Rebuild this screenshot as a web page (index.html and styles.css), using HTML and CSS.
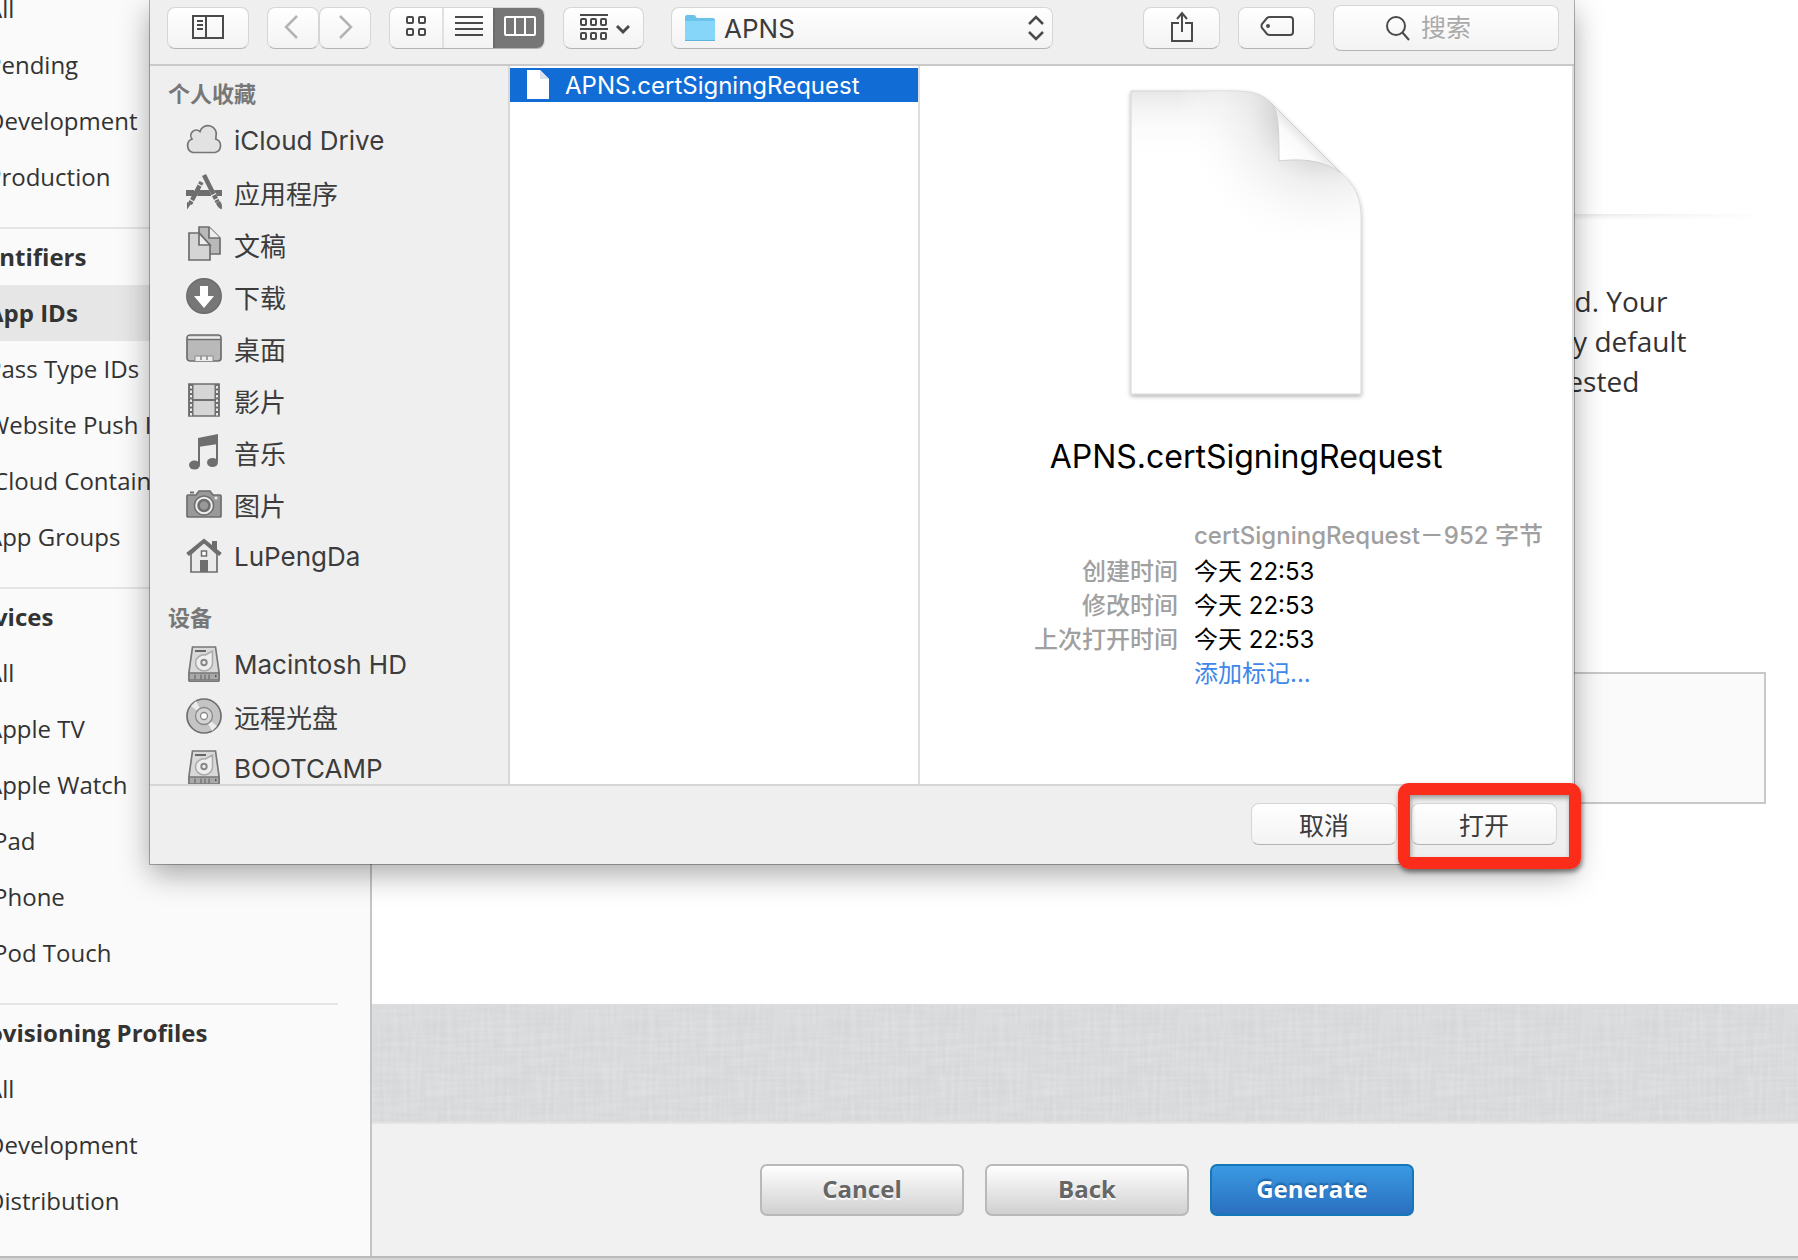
FILE: index.html
```html
<!DOCTYPE html>
<html lang="zh-CN">
<head>
<meta charset="utf-8">
<meta name="viewport" content="width=device-width, initial-scale=1">
<title>Certificates, Identifiers &amp; Profiles</title>
<link rel="stylesheet" href="styles.css">
</head>
<body>
<svg class="defs" aria-hidden="true">
  <symbol id="drive" viewBox="0 0 36 36">
    <path d="M6.500 1h23l3.500 25v8q0 1.500-1.500 1.500h-27q-1.500 0-1.500-1.500v-8z" fill="#d9d9d9" stroke="#777" stroke-width="1.700"/>
    <path d="M3 27h30v7H3z" fill="#a9a9a9" stroke="#777" stroke-width="1.500"/>
    <path d="M9 28.500v5M15 28.500v5M19 28.500v5M23 28.500v5" stroke="#777" stroke-width="1.500"/>
    <path d="M29 30h1.500" stroke="#555" stroke-width="2"/>
    <path d="M9 5h11" stroke="#666" stroke-width="2"/>
    <path d="M26.500 5v11a8.500 8 0 1 1-7-7z" fill="#eee" stroke="#aaa" stroke-width="1.500"/>
    <circle cx="18" cy="16.500" r="2.700" fill="#eee" stroke="#888" stroke-width="2"/>
  </symbol>
</svg>

<div class="page">
  <nav class="side" aria-label="Account">
    <ul>
      <li><a href="#">All</a></li>
      <li><a href="#">Pending</a></li>
      <li><a href="#">Development</a></li>
      <li><a href="#">Production</a></li>
    </ul>
    <h2>Identifiers</h2>
    <ul>
      <li class="current"><a href="#">App IDs</a></li>
      <li><a href="#">Pass Type IDs</a></li>
      <li><a href="#">Website Push IDs</a></li>
      <li><a href="#">iCloud Containers</a></li>
      <li><a href="#">App Groups</a></li>
    </ul>
    <h2>Devices</h2>
    <ul>
      <li><a href="#">All</a></li>
      <li><a href="#">Apple TV</a></li>
      <li><a href="#">Apple Watch</a></li>
      <li><a href="#">iPad</a></li>
      <li><a href="#">iPhone</a></li>
      <li><a href="#">iPod Touch</a></li>
    </ul>
    <h2>Provisioning Profiles</h2>
    <ul>
      <li><a href="#">All</a></li>
      <li><a href="#">Development</a></li>
      <li><a href="#">Distribution</a></li>
    </ul>
  </nav>
  <main class="main">
    <section class="content">
      <div class="rule"></div>
      <p class="intro">When your CSR file is created, a public and private key pair is automatically generated. Your<br>private key is stored on your computer. On a Mac, it is stored in the login Keychain by default<br>and can be viewed in the Keychain Access app under the "Keys" category. Your requested</p>
      <div class="upload"></div>
    </section>
    <div class="linen"></div>
    <footer class="actions">
      <button class="btn" type="button">Cancel</button>
      <button class="btn" type="button">Back</button>
      <button class="btn primary" type="button">Generate</button>
    </footer>
  </main>
</div>

<div class="dialog" role="dialog" aria-label="APNS">
  <div class="toolbar">
    <button class="tool w82" type="button" aria-label="Sidebar">
      <svg width="34" height="26" viewBox="0 0 34 26" fill="none" stroke="#4a4a4a" stroke-width="2"><rect x="2" y="1" width="30" height="22"/><path d="M15 1v22M6 6h6M6 10h6M6 14h6"/></svg>
    </button>
    <div class="pair">
      <button class="tool" type="button" aria-label="Back"><svg width="18" height="28" viewBox="0 0 18 28" fill="none" stroke="#b3b3b3" stroke-width="2.500"><path d="M13 2 2 13l11 11"/></svg></button>
      <button class="tool" type="button" aria-label="Forward"><svg width="18" height="28" viewBox="0 0 18 28" fill="none" stroke="#b3b3b3" stroke-width="2.500"><path d="m4 2 11 11L4 24"/></svg></button>
    </div>
    <div class="segments">
      <button type="button" aria-label="Icons"><svg width="22" height="22" viewBox="0 0 22 22" fill="none" stroke="#4a4a4a" stroke-width="2"><rect x="2" y="2" width="6" height="6" rx="1"/><rect x="14" y="2" width="6" height="6" rx="1"/><rect x="2" y="14" width="6" height="6" rx="1"/><rect x="14" y="14" width="6" height="6" rx="1"/></svg></button>
      <button type="button" aria-label="List"><svg width="28" height="22" viewBox="0 0 28 22" stroke="#4a4a4a" stroke-width="2"><path d="M0 2h28M0 8h28M0 14h28M0 20h28"/></svg></button>
      <button class="on" type="button" aria-label="Columns"><svg width="32" height="22" viewBox="0 0 32 22" fill="none" stroke="#fff" stroke-width="2"><rect x="1" y="2" width="30" height="18" rx="1"/><path d="M11 2v18M21 2v18"/></svg></button>
    </div>
    <button class="tool w81" type="button" aria-label="Group">
      <svg width="52" height="28" viewBox="0 0 52 28" fill="none" stroke="#4a4a4a" stroke-width="2"><path d="M2 1h28M2 15h28"/><rect x="3" y="5" width="5" height="6" rx="1"/><rect x="13" y="5" width="5" height="6" rx="1"/><rect x="23" y="5" width="5" height="6" rx="1"/><rect x="3" y="19" width="5" height="6" rx="1"/><rect x="13" y="19" width="5" height="6" rx="1"/><rect x="23" y="19" width="5" height="6" rx="1"/><path d="m39 12 6 6 6-6" stroke-width="3"/></svg>
    </button>
    <div class="folder">
      <svg class="folder-icon" width="32" height="28" viewBox="0 0 32 28"><path d="M1 3q0-2 2-2h7q1.500 0 2 2l1 1h16q2 0 2 2v18H1z" fill="#6bc3ea"/><path d="M1 7h30v19q0 1-1 1H2q-1 0-1-1z" fill="#85d6f9"/><path d="M1 26.500h30" stroke="#5fb4dc"/></svg>
      <select aria-label="Folder"><option>APNS</option></select>
      <svg class="arrows" width="16" height="26" viewBox="0 0 16 26" fill="none" stroke="#4a4a4a" stroke-width="2.500"><path d="m1 9 7-7 7 7M1 17l7 7 7-7"/></svg>
    </div>
    <button class="tool w77 first-right" type="button" aria-label="Share">
      <svg width="24" height="36" viewBox="0 0 24 36" fill="none" stroke="#4a4a4a" stroke-width="2"><path d="M9 13H2v18h20V13h-7M12 22V3M7 9l5-6 5 6"/></svg>
    </button>
    <button class="tool w77" type="button" aria-label="Tags">
      <svg width="36" height="26" viewBox="0 0 36 26" fill="none" stroke="#4a4a4a" stroke-width="2"><path d="M11 2h20q3 0 3 3v12q0 3-3 3H11q-2 0-3-1l-5-6q-1-2 0-4l5-6q1-1 3-1z"/><circle cx="9" cy="11" r="1"/></svg>
    </button>
    <label class="search">
      <svg width="26" height="26" viewBox="0 0 26 26" fill="none" stroke="#4a4a4a" stroke-width="2"><circle cx="11" cy="11" r="9"/><path d="m17 17 7 8"/></svg>
      <input type="text" placeholder="搜索" aria-label="搜索">
    </label>
  </div>

  <div class="panes">
    <nav class="places" aria-label="个人收藏">
      <h3>个人收藏</h3>
      <ul>
        <li><svg viewBox="0 0 36 36"><path d="M7 30.500a6.500 7 0 0 1-1-13.500 5.500 5.500 0 0 1 8-7.500A8.300 8.300 0 0 1 30 14.500q0 1.500-.300 2.500A7 7 0 0 1 29 30.500z" fill="#e2e2e2" stroke="#757575" stroke-width="1.700"/></svg>iCloud Drive</li>
        <li><svg viewBox="0 0 36 36"><path d="M0 16h8v6H0zM13 16h10l3 6H11zM28 16h8v6h-5z" fill="#6e6e6e"/><path d="M15.500 8 4 30M18 1l13.500 27" stroke="#6e6e6e" stroke-width="4.500"/><path d="m1 28 4 2-4 5.500zM30 29l4-2q3 4 1.500 8.500Q31 33 30 29z" fill="#6e6e6e"/><path d="m12 10 5 3M3 25l5 3M25 22l5-2.500M27 27l6-3" stroke="#eee" stroke-width="1.300"/></svg>应用程序</li>
        <li><svg viewBox="0 0 36 36" fill="#d5d5d5" stroke="#6e6e6e" stroke-width="1.700"><path d="M13 1h10l11 11v16H13z" fill="#b9b9b9"/><path d="M23 1v11h11" fill="#eee"/><path d="M3 7h10l11 12v15H3z"/><path d="M13 7v12h11z" fill="#eee"/></svg>文稿</li>
        <li><svg viewBox="0 0 36 36"><circle cx="18" cy="18" r="17.200" fill="#777" stroke="#6b6b6b" stroke-width="1.500"/><path d="M14 8h8v10h6L18 30 8 18h6z" fill="#fff"/></svg>下载</li>
        <li><svg viewBox="0 0 36 36"><rect x="1" y="5" width="34" height="26" rx="3" fill="#b9b9b9" stroke="#6e6e6e" stroke-width="1.700"/><path d="M2 6.500h32v2.500H2z" fill="#eee"/><path d="M2 9.500h32" stroke="#6e6e6e" stroke-width="1.500"/><path d="M9 31v-5h18v5" fill="#eee" stroke="#888"/><path d="M15 26v4M21 26v4" stroke="#888" stroke-width="1.500"/></svg>桌面</li>
        <li><svg viewBox="0 0 36 36"><path d="M3 2h30v32H3z" fill="#d5d5d5" stroke="#6e6e6e" stroke-width="1.700"/><path d="M5 2v32M31 2v32" stroke="#6e6e6e" stroke-width="5"/><path d="M5 4v30M31 4v30" stroke="#e8e8e8" stroke-width="2" stroke-dasharray="2.500 2"/><path d="M7 18h22" stroke="#6e6e6e" stroke-width="2"/></svg>影片</li>
        <li><svg viewBox="0 0 36 36"><path d="M12 4 32 0v10l-20 3z" fill="#6e6e6e"/><path d="M13 5v26M31 2v25" stroke="#6e6e6e" stroke-width="2"/><ellipse cx="8.500" cy="31" rx="5.500" ry="4.500" fill="#6e6e6e"/><ellipse cx="26.500" cy="28.500" rx="5.500" ry="4.500" fill="#6e6e6e"/></svg>音乐</li>
        <li><svg viewBox="0 0 36 36"><path d="M2 9h8l3-4h11l3 4h7q1 0 1 1v20q0 1-1 1H2q-1 0-1-1V10q0-1 1-1z" fill="#999" stroke="#6e6e6e" stroke-width="1.700"/><path d="M4 6.500h4" stroke="#6e6e6e" stroke-width="2"/><circle cx="18" cy="19.500" r="9.500" fill="#eee" stroke="#6e6e6e" stroke-width="1.500"/><circle cx="18" cy="19.500" r="5.500" fill="#999" stroke="#6e6e6e" stroke-width="2.500"/><circle cx="30" cy="12" r="1.500" fill="#eee"/></svg>图片</li>
        <li><svg viewBox="0 0 36 36"><path d="M26 3h5v11h-5z" fill="#6e6e6e"/><path d="M5 16 18 4l13 12v18H5z" fill="#eaeaea" stroke="#6e6e6e" stroke-width="1.700"/><path d="M1.500 16.500 18 3l16.500 13.500" fill="none" stroke="#6e6e6e" stroke-width="4"/><path d="M14 22h8v12h-8z" fill="#6e6e6e"/><path d="M15.500 13h5v5h-5z" fill="#fff" stroke="#6e6e6e" stroke-width="1.500"/></svg>LuPengDa</li>
      </ul>
      <h3>设备</h3>
      <ul>
        <li><svg><use href="#drive"/></svg>Macintosh HD</li>
        <li><svg viewBox="0 0 36 36"><circle cx="18" cy="18" r="17" fill="#c4c4c4" stroke="#6e6e6e" stroke-width="1.700"/><path d="M18 18 5 8l5-5zM18 18l13 10-5 5z" fill="#ececec"/><circle cx="18" cy="18" r="8.500" fill="#d4d4d4" stroke="#888" stroke-width="1.300"/><circle cx="18" cy="18" r="3.500" fill="#fff" stroke="#888" stroke-width="1.300"/></svg>远程光盘</li>
        <li><svg><use href="#drive"/></svg>BOOTCAMP</li>
      </ul>
    </nav>
    <div class="files">
      <div class="file">
        <svg width="22" height="30" viewBox="0 0 22 30"><path d="M0 0h13l9 9v20H0z" fill="#fff"/><path d="M13 0v9h9z" fill="#d9e2ec"/></svg>
        <span>APNS.certSigningRequest</span>
      </div>
    </div>
    <section class="preview">
      <svg class="sheet" width="252" height="320" viewBox="1120 84 252 320">
        <defs>
          <linearGradient id="top" x1="0" y1="0" x2="0" y2="1"><stop offset="0" stop-color="#e8e8e8"/><stop offset=".06" stop-color="#f4f4f4"/><stop offset=".12" stop-color="#fbfbfb"/><stop offset=".2" stop-color="#fff"/></linearGradient>
          <radialGradient id="curl" gradientUnits="userSpaceOnUse" cx="1322" cy="112" r="145"><stop offset=".2" stop-color="#bbb"/><stop offset=".34" stop-color="#d2d2d2" stop-opacity=".8"/><stop offset=".5" stop-color="#e6e6e6" stop-opacity=".6"/><stop offset=".7" stop-color="#f4f4f4" stop-opacity=".5"/><stop offset="1" stop-color="#fff" stop-opacity="0"/></radialGradient>
          <linearGradient id="flap" x1="0" y1="1" x2="1" y2="0"><stop offset=".2" stop-color="#fff"/><stop offset=".4" stop-color="#fafafa"/><stop offset=".5" stop-color="#e8e8e8"/></linearGradient>
          <filter id="drop" x="-10%" y="-10%" width="120%" height="120%"><feDropShadow dx="0" dy="2" stdDeviation="2" flood-opacity=".3"/></filter>
        </defs>
        <path d="M1131 91h101c18 0 30 2 40 13l68 68c14 12 21 25 21 46v176h-230z" fill="url(#top)" stroke="#d4d4d4" filter="url(#drop)"/>
        <path d="M1131 91h101c18 0 30 2 40 13l68 68c14 12 21 25 21 46v176h-230z" fill="url(#curl)"/>
        <path d="M1271 103c7 9 8 18 8 58 25-3 45 0 62 12z" fill="url(#flap)" stroke="#d0d0d0"/>
      </svg>
      <h1>APNS.certSigningRequest</h1>
      <dl>
        <dt></dt><dd class="kind">certSigningRequest－952 字节</dd>
        <dt>创建时间</dt><dd>今天 22:53</dd>
        <dt>修改时间</dt><dd>今天 22:53</dd>
        <dt>上次打开时间</dt><dd>今天 22:53</dd>
        <dt></dt><dd><a href="#">添加标记...</a></dd>
      </dl>
    </section>
  </div>

  <div class="confirm">
    <button class="tool" type="button">取消</button>
    <div class="marked"><button class="tool" type="button">打开</button></div>
  </div>
</div>
</body>
</html>
```
FILE: styles.css
```css
* { box-sizing: border-box; }

body {
  margin: 0;
  background: #d4d4d4;
  color: #333;
  font-family: "Open Sans", "Noto Sans", sans-serif;
  overflow: hidden;
}

ul, dl, dd, h1, h2, h3, p { margin: 0; padding: 0; }
ul { list-style: none; }
button, input, select { font: inherit; color: inherit; }
svg { flex: none; display: block; }
.defs { position: absolute; width: 0; height: 0; }

/* Portal page, scrolled a little down and to the right */
.page {
  display: flex;
  margin: -19px 0 0 -40px;
  border-bottom: 2px solid #bbb;
}

.side {
  flex: none;
  width: 412px;
  padding-bottom: 27px;
  background: #fafafa;
  border-right: 2px solid #c4c4c4;
  font-size: 24px;
  line-height: 56px;
}

.side li { padding-left: 27px; }
.side a { color: inherit; text-decoration: none; }
.side .current { background: #e6e6e6; font-weight: 700; }

.side h2 {
  margin: 22px 32px 0 0;
  padding-left: 2px;
  border-top: 2px solid #e4e4e4;
  font-size: 24px;
  font-weight: 700;
}

.main {
  flex: 1;
  display: flex;
  flex-direction: column;
  min-width: 0;
  background: #fff;
}

.content { flex: 1; padding: 233px 32px 0 56px; }

.rule {
  height: 6px;
  background: linear-gradient(90deg, transparent 80%, #fff), linear-gradient(#dedede, #fff);
}

.intro { padding: 61px 0 0 50px; font-size: 28px; line-height: 40px; white-space: nowrap; }

.upload {
  height: 132px;
  margin-top: 271px;
  background: #fafafa;
  border: 2px solid #c8c8c8;
}

/* Woven cloth: noise stretched along each axis */
.linen {
  height: 120px;
  border-bottom: 2px solid #e4e4e5;
  background:
    url("data:image/svg+xml,%3Csvg xmlns='http://www.w3.org/2000/svg' width='202' height='202'%3E%3Cfilter id='a' x='0' y='0' width='1' height='1'%3E%3CfeTurbulence type='fractalNoise' baseFrequency='.02 .25' numOctaves='2' stitchTiles='stitch'/%3E%3CfeColorMatrix values='0 0 0 0 1 0 0 0 0 1 0 0 0 0 1 .3 0 0 0 -.1'/%3E%3C/filter%3E%3Cfilter id='b' x='0' y='0' width='1' height='1'%3E%3CfeTurbulence type='fractalNoise' baseFrequency='.25 .02' numOctaves='2' stitchTiles='stitch'/%3E%3CfeColorMatrix values='0 0 0 0 1 0 0 0 0 1 0 0 0 0 1 .3 0 0 0 -.1'/%3E%3C/filter%3E%3Crect width='202' height='202' filter='url(%23a)'/%3E%3Crect width='202' height='202' filter='url(%23b)'/%3E%3C/svg%3E"),
    #d6d7d9;
}

.actions {
  display: flex;
  justify-content: center;
  gap: 21px;
  padding: 40px 0 40px 4px;
  background: #f1f1f1;
}

.btn {
  width: 204px;
  height: 52px;
  padding: 0 0 4px;
  border: 2px solid #b9b9b9;
  border-radius: 7px;
  background: linear-gradient(#fff, #d0d0d0);
  color: #666;
  font-size: 24px;
  font-weight: 700;
  text-shadow: 0 2px 1px #fff;
}

.btn.primary {
  border-color: #1377b8;
  background: linear-gradient(#3b99e3, #2a70bf);
  color: #fff;
  text-shadow: 0 -2px 2px rgba(0,60,120,.5);
}

/* File chooser sheet */
.dialog {
  position: absolute;
  top: 0;
  left: 150px;
  right: 224px;
  background: #efefef;
  box-shadow: 0 0 0 1px rgba(0,0,0,.28), 0 10px 28px rgba(0,0,0,.34);
  color: #3c3c3c;
  font-family: Inter, "Noto Sans CJK SC", sans-serif;
}

.toolbar {
  display: flex;
  align-items: center;
  gap: 18px;
  height: 66px;
  padding: 0 15px 8px 17px;
  border-bottom: 2px solid #c9c9c9;
}

.tool, .segments, .folder, .search {
  display: flex;
  align-items: center;
  justify-content: center;
  height: 42px;
  padding: 0;
  border: 1px solid #d6d6d6;
  border-bottom-color: #b4b4b4;
  border-radius: 8px;
  background: linear-gradient(#fff, #f3f3f3);
}

.w82 { width: 82px; }
.w81 { width: 81px; }
.w77 { width: 77px; }
.pair { display: flex; }
.pair .tool { width: 52px; }

.segments { overflow: hidden; align-items: stretch; }
.segments button {
  display: flex;
  align-items: center;
  justify-content: center;
  width: 51px;
  padding: 0 0 4px;
  border: 0;
  border-left: 2px solid #e0e0e0;
  background: none;
}
.segments button:first-child { width: 52px; border-left: 0; }
.segments .on { background: #767676; border-color: #6b6b6b; }

.folder { position: relative; width: 382px; margin-left: 9px; font-size: 26px; }
.folder select {
  width: 100%;
  height: 40px;
  padding: 0 40px 0 52px;
  border: 0;
  background: none;
  appearance: none;
}
.folder-icon { position: absolute; left: 12px; top: 6px; }
.arrows { position: absolute; right: 8px; top: 7px; }

.first-right { margin-left: auto; }
.search { width: 226px; height: 46px; gap: 10px; }
.search input {
  width: 86px;
  padding: 0;
  border: 0;
  background: none;
  font-size: 25px;
}
.search input::placeholder { color: #aaa; opacity: 1; }

.panes { display: flex; height: 718px; overflow: hidden; }

.places {
  flex: none;
  width: 360px;
  padding: 8px 0 0;
  border-right: 2px solid #d8d8d8;
  font-size: 26px;
}
.places h3 {
  padding-left: 18px;
  color: #777;
  font-size: 22px;
  font-weight: 700;
  line-height: 40px;
}
.places ul + h3 { margin-top: 16px; }
.places li { display: flex; align-items: center; gap: 12px; height: 52px; padding-left: 36px; }
.places svg { width: 36px; height: 36px; }

.files {
  flex: none;
  width: 410px;
  padding-top: 2px;
  border-right: 2px solid #dedede;
  background: #fff;
}
.file {
  display: flex;
  align-items: center;
  gap: 16px;
  height: 34px;
  padding-left: 17px;
  background: #126cd6;
  color: #fff;
  font-size: 24px;
}

.preview {
  flex: 1;
  display: flex;
  flex-direction: column;
  align-items: center;
  padding-top: 18px;
  border-right: 2px solid #dedede;
  background: #fff;
  color: #000;
}
.preview h1 { margin-top: 31px; font-size: 32px; font-weight: 400; line-height: 44px; }

.preview dl {
  display: grid;
  grid-template-columns: 258px 1fr;
  column-gap: 16px;
  align-self: stretch;
  margin-top: 40px;
  font-size: 24px;
  line-height: 34px;
  white-space: nowrap;
}
.preview dt { color: #a0a0a0; font-weight: 500; text-align: right; }
.preview .kind { padding-bottom: 2px; color: #a0a0a0; font-weight: 500; }
.preview a { color: #3f87e8; text-decoration: none; }

.confirm {
  display: flex;
  justify-content: flex-end;
  align-items: flex-start;
  gap: 14px;
  height: 80px;
  padding: 17px 17px 0 0;
  border-top: 2px solid #d6d6d6;
  font-size: 25px;
}
.confirm .tool { width: 146px; }

/* Callout frame round the confirm button */
.marked { position: relative; }
.marked::after {
  content: "";
  position: absolute;
  inset: -20px -24px -24px -13px;
  border: 12px solid #fc2c1b;
  border-radius: 11px;
  box-shadow: 1px 3px 5px rgba(0,0,0,.5), inset 1px 3px 5px rgba(0,0,0,.35);
  pointer-events: none;
}
```
